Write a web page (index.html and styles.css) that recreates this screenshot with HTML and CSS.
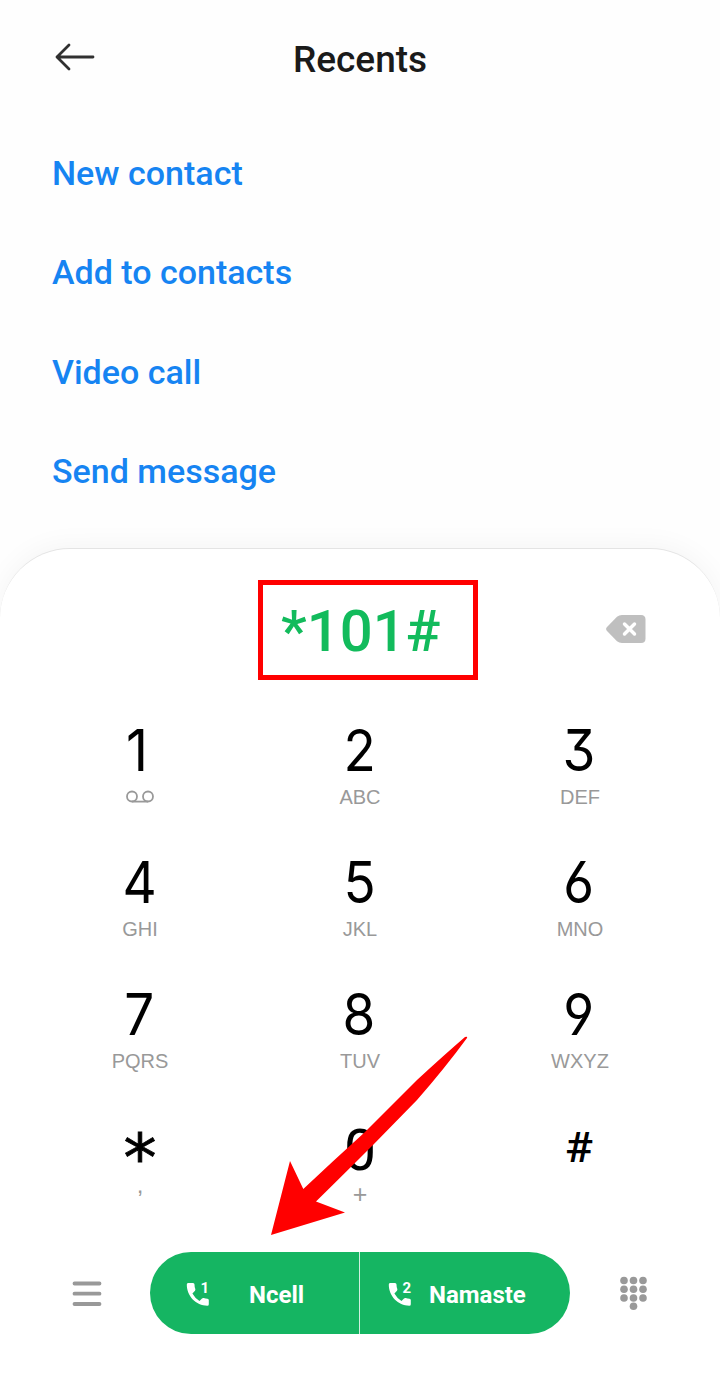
FILE: index.html
```html
<!DOCTYPE html>
<html lang="en">
<head>
<meta charset="utf-8">
<title>Recents</title>
<link rel="stylesheet" href="styles.css">
</head>
<body>
<main class="phone">
  <header class="header">
    <svg class="back" width="42" height="32" viewBox="0 0 42 32"><path d="M16 4 L4 16 L16 28 M4 16 H40"/></svg>
    <h1 class="title">Recents</h1>
  </header>
  <nav class="actions">
    <a class="action new">New contact</a>
    <a class="action add">Add to contacts</a>
    <a class="action video">Video call</a>
    <a class="action send">Send message</a>
  </nav>
  <section class="sheet">
    <div class="entry">
      <div class="number">*101#</div>
      <svg class="erase" width="40" height="28" viewBox="0 0 40 28"><path class="erase-body" d="M1 12 L11 1.800 Q13 0 16 0 H35 Q39.500 0 39.500 4.500 V23.500 Q39.500 28 35 28 H16 Q13 28 11 26.200 L1 16 Q-.8 14 1 12Z"/><path class="erase-x" d="M18.500 9 L28.500 19 M28.500 9 L18.500 19"/></svg>
    </div>
    <div class="keypad">
      <div class="key"><span class="digit one">1</span><svg class="voicemail" width="28" height="14" viewBox="0 0 28 14"><circle cx="6" cy="6.500" r="5"/><circle cx="22" cy="6.500" r="5"/><path d="M6 11.600H22"/></svg></div>
      <div class="key"><span class="digit">2</span><span class="letters">ABC</span></div>
      <div class="key"><span class="digit">3</span><span class="letters">DEF</span></div>
      <div class="key"><span class="digit">4</span><span class="letters">GHI</span></div>
      <div class="key"><span class="digit">5</span><span class="letters">JKL</span></div>
      <div class="key"><span class="digit">6</span><span class="letters">MNO</span></div>
      <div class="key"><span class="digit">7</span><span class="letters">PQRS</span></div>
      <div class="key"><span class="digit">8</span><span class="letters">TUV</span></div>
      <div class="key"><span class="digit">9</span><span class="letters">WXYZ</span></div>
      <div class="key"><span class="digit star">*</span><span class="letters comma">,</span></div>
      <div class="key"><span class="digit zero">0</span><span class="letters plus">+</span></div>
      <div class="key"><span class="digit hash">#</span></div>
    </div>
    <footer class="bar">
      <svg class="menu" width="30" height="28" viewBox="0 0 30 28"><path d="M2.500 4.500H27.500M2.500 14.700H27.500M2.500 25H27.500"/></svg>
      <div class="calls">
        <button class="call sim1"><svg class="handset" width="26" height="30" viewBox="0 0 26 30"><path d="M2 5H7Q8.500 5 8.500 6.500Q8.500 9 9.300 11Q9.600 11.900 9 12.700L6.400 15.500Q9.200 20.500 13.500 23L16 20.500Q16.700 19.800 17.700 20.100Q19.500 20.700 21.500 20.800Q22.800 21 22.800 22V26.200Q22.800 27.700 21.300 27.700C10 27.700 .8 18 .8 6.500Q.8 5 2 5Z"/><text x="14.500" y="14.500">1</text></svg><span class="sim-name">Ncell</span></button>
        <button class="call sim2"><svg class="handset" width="26" height="30" viewBox="0 0 26 30"><path d="M2 5H7Q8.500 5 8.500 6.500Q8.500 9 9.300 11Q9.600 11.900 9 12.700L6.400 15.500Q9.200 20.500 13.500 23L16 20.500Q16.700 19.800 17.700 20.100Q19.500 20.700 21.500 20.800Q22.800 21 22.800 22V26.200Q22.800 27.700 21.300 27.700C10 27.700 .8 18 .8 6.500Q.8 5 2 5Z"/><text x="14.500" y="14.500">2</text></svg><span class="sim-name">Namaste</span></button>
      </div>
      <svg class="dots" width="27" height="34" viewBox="0 0 27 34"><circle cx="4" cy="4.500" r="3.800"/><circle cx="13.500" cy="4.500" r="3.800"/><circle cx="23" cy="4.500" r="3.800"/><circle cx="4" cy="13.300" r="3.800"/><circle cx="13.500" cy="13.300" r="3.800"/><circle cx="23" cy="13.300" r="3.800"/><circle cx="4" cy="22" r="3.800"/><circle cx="13.500" cy="22" r="3.800"/><circle cx="23" cy="22" r="3.800"/><circle cx="13.500" cy="30.200" r="3.800"/></svg>
    </footer>
  </section>
  <svg class="arrow" width="200" height="202" viewBox="0 0 200 202"><path d="M0 200 L19 126 L32.300 154 Q62 126 94 97 L146 45 Q172 21 194 2 Q197 1 196 3 Q174 33 146 65 L102 110 Q75 137 45 166.500 L74 177.500Z"/></svg>
</main>
</body>
</html>
```
FILE: styles.css
```css
* { box-sizing: border-box; }
body { margin: 0; background: #fefefe; font-family: Roboto, sans-serif; }
.phone { position: relative; width: 720px; height: 1400px; overflow: hidden; }
.header { display: grid; grid-template-columns: 100px 1fr 100px; align-items: center; height: 118px; }
.back { justify-self: end; margin-right: 5.500px; margin-bottom: 4px; fill: none; stroke: #303030; stroke-width: 2.800; stroke-linecap: round; stroke-linejoin: round; }
.title { margin: 2px 0 0; text-align: center; font-size: 37px; font-weight: 500; line-height: 44px; color: #1a1a1a; }
.actions { display: flex; flex-direction: column; padding: 6px 0 0 52px; height: 430px; }
.action { flex: none; height: 99.400px; padding-top: 29px; line-height: 40px; font-size: 34px; font-weight: 500; color: #1684f2; }
.sheet { height: 852px; border-top: 1px solid #e4e4e4; border-radius: 70px 70px 0 0; background: #fff; box-shadow: 0 -2px 28px rgba(0,0,0,.045); }
.entry { display: grid; grid-template-columns: 220px 1fr; height: 165px; padding: 31px 0 0 258px; }
.number { width: 220px; height: 100px; border: 5px solid #f00; padding-left: 18px; line-height: 93px; font-size: 58px; font-weight: 500; color: #12bb5c; }
.erase { margin: 35px 0 0 128px; }
.erase-body { fill: #bfbfbf; }
.erase-x { stroke: #fff; stroke-width: 3.500; stroke-linecap: round; }
.keypad { display: grid; grid-template-columns: repeat(3, 220px); grid-auto-rows: 132px; justify-content: center; height: 528px; }
.key { display: flex; flex-direction: column; align-items: center; }
.digit { height: 72px; line-height: 74px; font-family: Inter, sans-serif; font-size: 57px; font-weight: 400; font-feature-settings: "cv03" 1, "cv04" 1, "cv09" 1; transform: translateX(-.8px) scaleX(.93); color: #000; }
.one { transform: translateX(-2.500px) scaleX(.95); }
.zero { font-family: Roboto, sans-serif; line-height: 81px; transform: none; }
.hash { font-family: Roboto, sans-serif; font-size: 43px; font-weight: 500; line-height: 75px; transform: translateX(-1px) scaleX(1.080); }
.star { font-family: "DejaVu Sans", sans-serif; font-size: 66px; line-height: 97px; -webkit-text-stroke: .8px #000; transform: none; }
.letters { height: 22px; line-height: 22px; font-family: "Liberation Sans", Arial, sans-serif; font-size: 20px; color: #999; }
.voicemail { margin-top: 4px; fill: none; stroke: #999; stroke-width: 1.800; }
.comma { line-height: 6px; font-size: 24px; }
.plus { line-height: 25px; font-size: 25px; }
.bar { display: flex; align-items: center; height: 82px; margin-top: 10px; padding: 0 73px 0 72px; }
.menu { flex: none; stroke: #999; stroke-width: 3.800; stroke-linecap: round; }
.calls { display: flex; flex: none; width: 420px; height: 82px; margin: 0 50px 0 48px; overflow: hidden; border-radius: 41px; background: #15b562; }
.call { display: flex; align-items: center; flex: none; width: 210px; padding: 0; border: 0; background: none; font-family: Roboto, sans-serif; color: #fff; }
.sim1 { padding-left: 36px; gap: 37px; border-right: 1px solid #d0f0df; }
.sim2 { padding-left: 28px; gap: 15px; }
.handset { flex: none; overflow: visible; fill: #fff; font-family: Roboto, sans-serif; font-size: 15px; font-weight: 700; }
.sim-name { margin-top: 3px; font-size: 24px; font-weight: 700; line-height: 30px; }
.dots { fill: #999; flex: none; }
.arrow { position: absolute; left: 271px; top: 1035px; fill: #f00; }
```
